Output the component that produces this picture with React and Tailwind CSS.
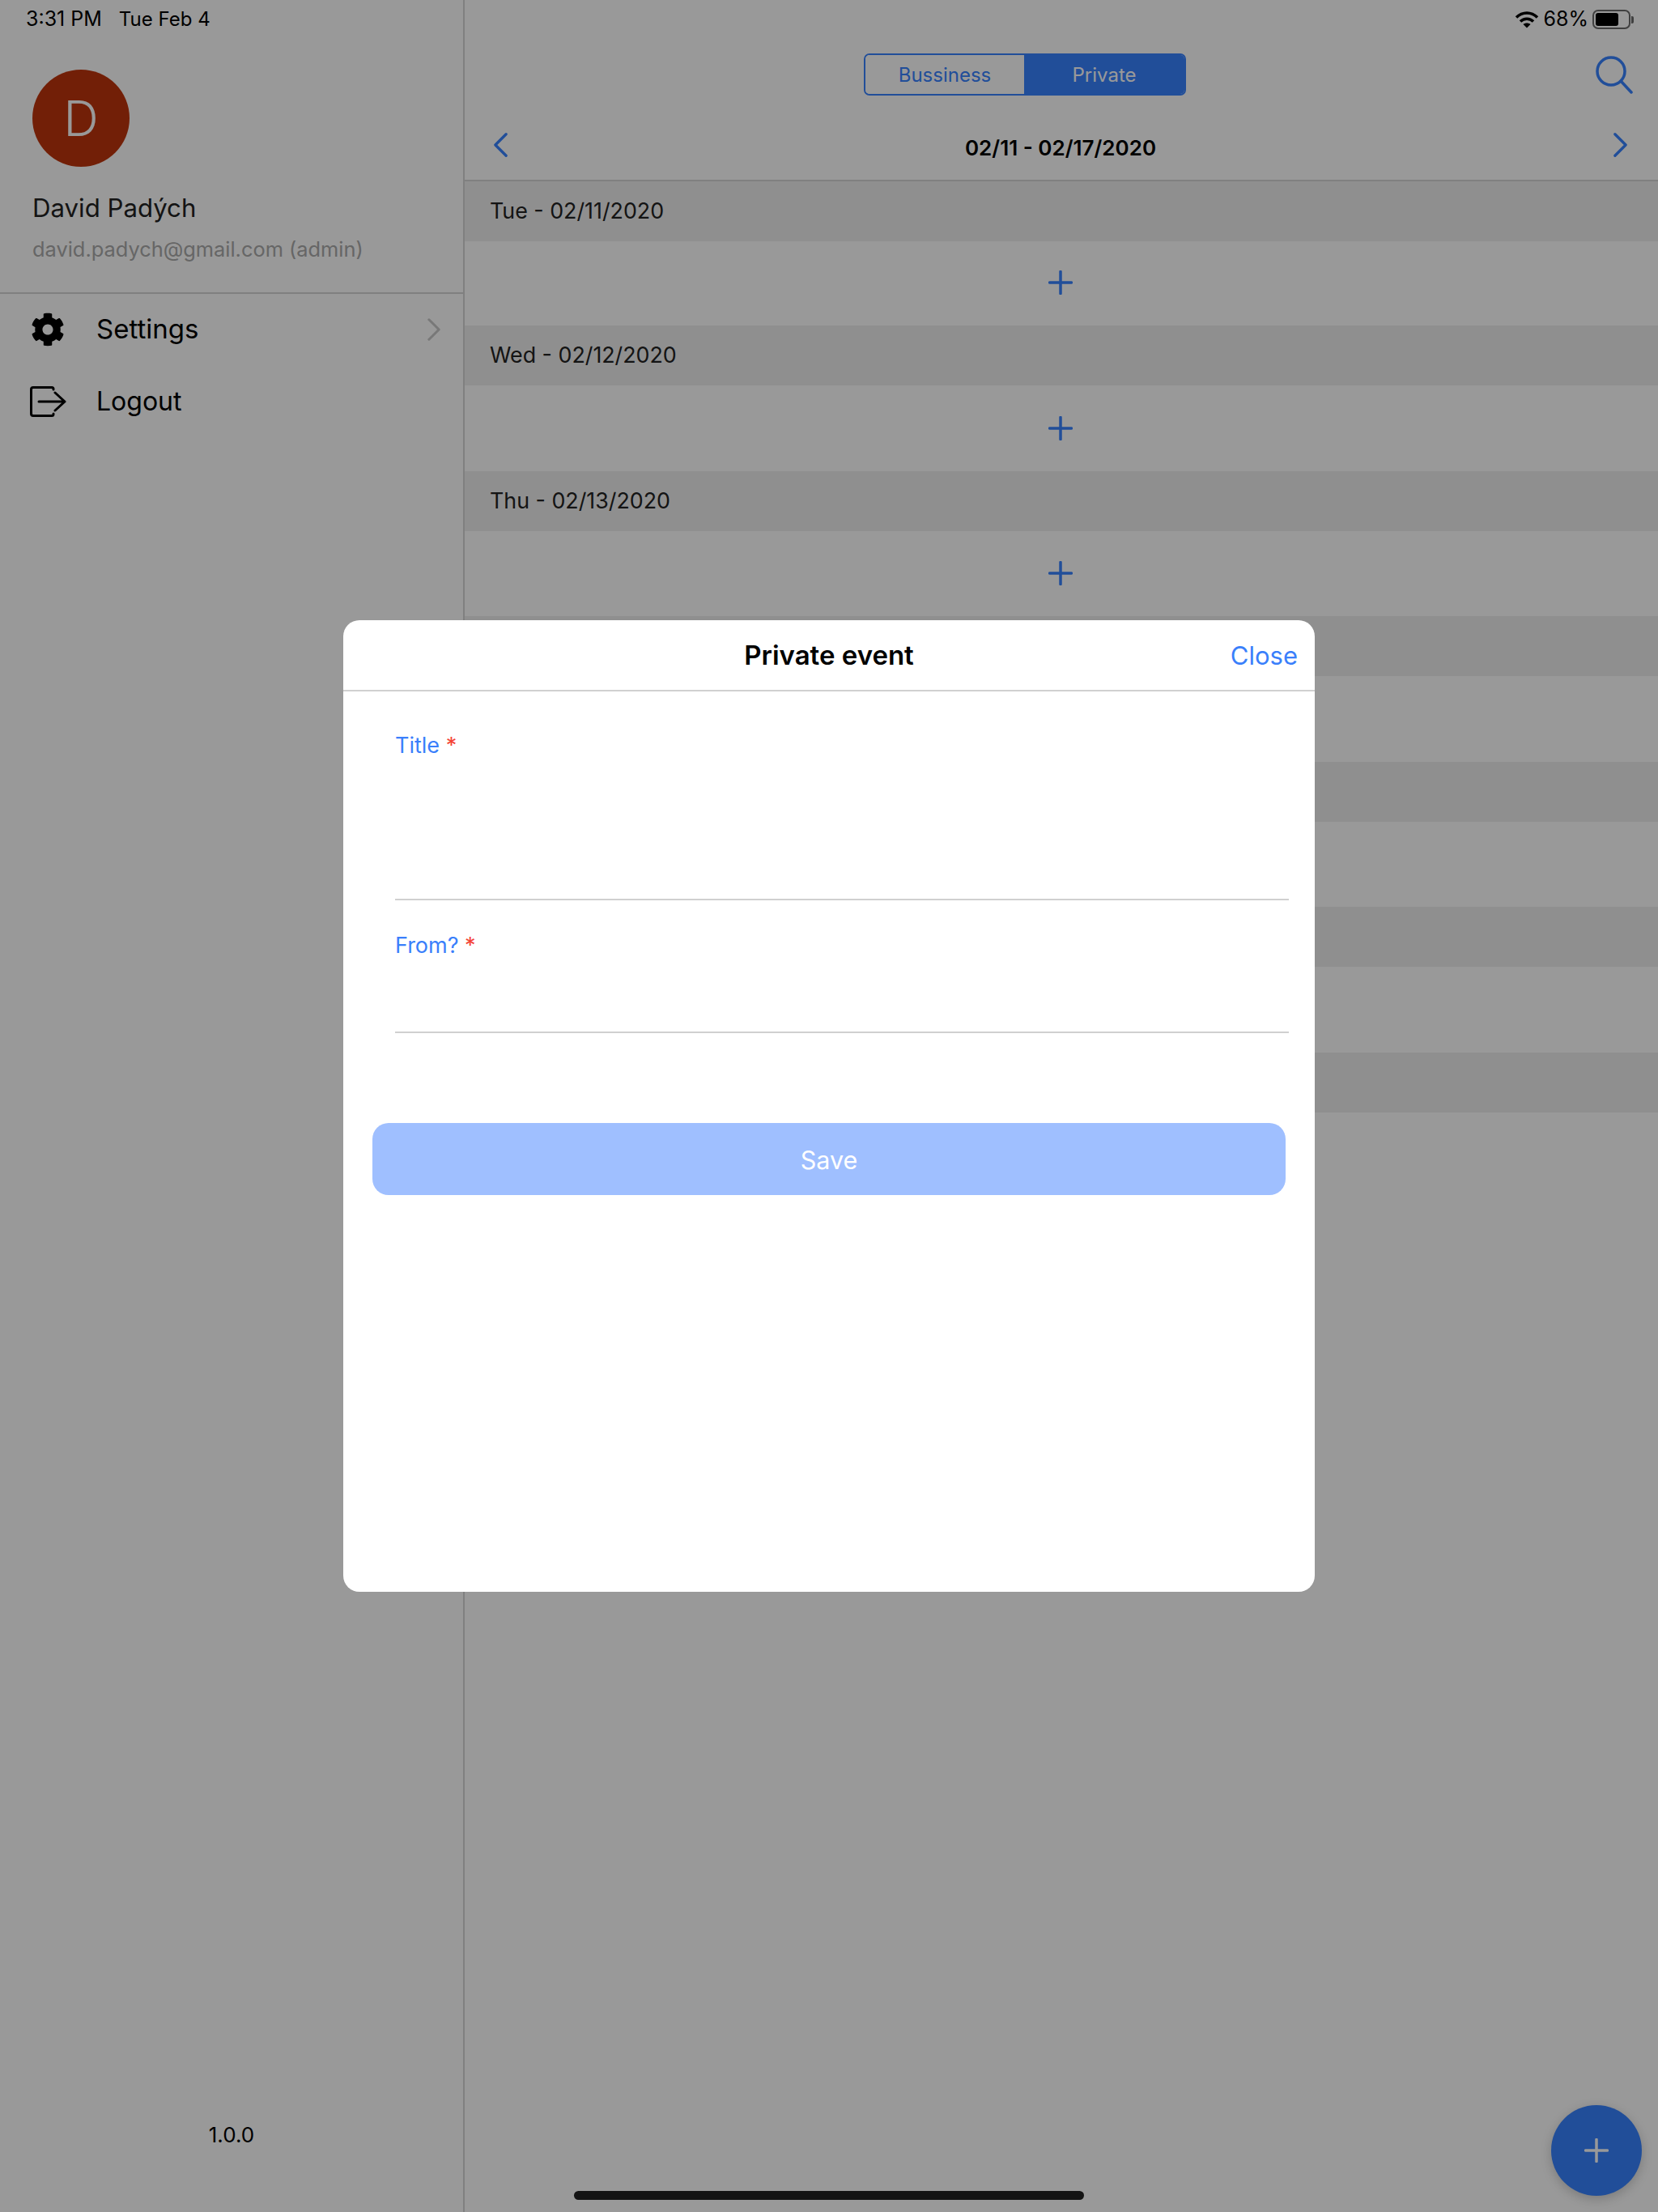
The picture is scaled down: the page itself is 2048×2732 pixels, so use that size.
import React from "react";
import { FaCog } from "react-icons/fa";

const days = [
  "Tue - 02/11/2020",
  "Wed - 02/12/2020",
  "Thu - 02/13/2020",
  "Fri - 02/14/2020",
  "Sat - 02/15/2020",
  "Sun - 02/16/2020",
  "Mon - 02/17/2020",
];

function Plus({ className }) {
  return (
    <svg className={className} viewBox="0 0 30 30" fill="none" stroke="currentColor" strokeWidth="3.5" strokeLinecap="round">
      <path d="M15 1.5V28.5M1.5 15H28.5" />
    </svg>
  );
}

function Chevron({ left, className }) {
  return (
    <svg className={className} viewBox="0 0 18 32" fill="none" stroke="currentColor" strokeWidth="3.5" strokeLinecap="round" strokeLinejoin="round">
      <path d={left ? "M16 2L2 16L16 30" : "M2 2L16 16L2 30"} />
    </svg>
  );
}

function Sidebar() {
  return (
    <aside className="w-[574px] shrink-0 h-full flex flex-col border-r-2 border-[#d6d6d6]">
      <div className="h-[48px] flex items-center pl-[32px] text-black">
        <span className="text-[25px]">3:31 PM</span>
        <span className="ml-[21px] text-[24px]">Tue Feb 4</span>
      </div>
      <div className="h-[315px] pl-[40px] pt-[38px] border-b-2 border-[#d6d6d6]">
        <div className="w-[120px] h-[120px] rounded-full bg-[#bf350c] flex items-center justify-center text-white text-[60px] font-light">
          D
        </div>
        <div className="mt-[29px] text-[31.2px] leading-[44px] text-[#222]">David Padých</div>
        <div className="mt-[11px] text-[25.4px] leading-[36px] text-[#aaaaaa]">david.padych@gmail.com (admin)</div>
      </div>
      <div className="h-[88px] flex items-center pl-[38px] pr-[28px] text-[33px] text-black">
        <FaCog className="w-[42px] h-[42px]" />
        <span className="ml-[39px] flex-1">Settings</span>
        <Chevron className="w-[16px] h-[28px] text-[#c8c8c8]" />
      </div>
      <div className="h-[90px] flex items-center pl-[36px] text-[32px] text-black">
        <svg className="w-[46px] h-[40px]" viewBox="0 0 46 40" fill="none" stroke="currentColor" strokeWidth="3" strokeLinecap="round" strokeLinejoin="round">
          <path d="M30 5V4.5Q30 2.5 28 2.5H5Q2.5 2.5 2.5 5V35Q2.5 37.5 5 37.5H28Q30 37.5 30 35.5V35" />
          <path d="M12 20H44M32 9L44 20L32 31" />
        </svg>
        <span className="ml-[37px]">Logout</span>
      </div>
      <div className="mt-auto pb-[77px] text-center text-[26px] leading-[36px] text-black">1.0.0</div>
    </aside>
  );
}

function Main() {
  return (
    <main className="relative flex-1 h-full flex flex-col">
      <div className="h-[48px] flex items-center justify-end pr-[30px] text-[25px] text-black">
        <svg className="w-[30px] h-[22px]" viewBox="0 0 30 22" fill="none" stroke="currentColor" strokeWidth="3.5" strokeLinecap="butt">
          <path d="M2 8.5C9.5 1 20.5 1 28 8.5" />
          <path d="M7 13.5C11.5 9 18.5 9 23 13.5" />
          <path d="M15 21.5L10.5 17C13 15 17 15 19.5 17Z" fill="currentColor" stroke="none" />
        </svg>
        <span className="ml-[5px]">68%</span>
        <div className="ml-[5px] w-[47px] h-[24px] rounded-[7px] border-2 border-[#6c6c6c] p-[2px] flex">
          <div className="w-[28px] h-full rounded-[3px] bg-black" />
        </div>
        <div className="ml-[1px] w-[3px] h-[9px] rounded-r-[2px] bg-[#6c6c6c]" />
      </div>
      <div className="h-[88px] flex items-center">
        <div className="flex-1 flex justify-center">
          <div className="w-[398px] h-[52px] flex rounded-[7px] border-2 border-[#3782ff] overflow-hidden text-[24px]">
            <div className="w-[196px] pt-[2px] bg-white flex items-center justify-center text-[#3782ff]">Bussiness</div>
            <div className="flex-1 pt-[2px] bg-[#3782ff] flex items-center justify-center text-white">Private</div>
          </div>
        </div>
        <div className="pl-[13px] pr-[31px]">
          <svg className="w-[46px] h-[47px] text-[#3782ff]" viewBox="0 0 46 47" fill="none" stroke="currentColor" strokeWidth="3.5" strokeLinecap="round">
            <circle cx="19" cy="19" r="17" />
            <path d="M31 31L44 45" />
          </svg>
        </div>
      </div>
      <div className="h-[88px] flex items-center justify-between pl-[36px] pr-[38px] border-b-2 border-[#d6d6d6]">
        <Chevron left className="w-[17px] h-[32px] text-[#3782ff]" />
        <span className="mt-[6px] text-[26px] font-semibold text-black">02/11 - 02/17/2020</span>
        <Chevron className="w-[17px] h-[32px] text-[#3782ff]" />
      </div>
      {days.map((day, i) => (
        <div key={day}>
          <div className="h-[74px] pb-[2px] flex items-center pl-[31px] bg-[#eeeeee] text-[26.8px] text-[#222]">{day}</div>
          <div className={i === 0 ? "h-[104px] pr-[2px] pb-[2px] flex items-center justify-center" : "h-[105.6px] pr-[2px] flex items-center justify-center"}>
            <Plus className="w-[30px] h-[30px] text-[#3782ff]" />
          </div>
        </div>
      ))}
      <button className="absolute right-[20px] bottom-[20px] w-[112px] h-[112px] rounded-full bg-[#3782ff] flex items-center justify-center shadow-[0_4px_14px_rgba(0,0,0,0.2)]">
        <Plus className="w-[30px] h-[30px] text-white" />
      </button>
    </main>
  );
}

function EventModal() {
  return (
    <div className="w-[1200px] h-[1200px] bg-white rounded-[20px] flex flex-col">
      <div className="relative h-[88px] shrink-0 pt-[2px] flex items-center justify-center border-b-2 border-[#d0d0d0]">
        <span className="text-[33px] font-semibold text-black">Private event</span>
        <span className="absolute right-[21px] text-[31px] text-[#3a7ffb]">Close</span>
      </div>
      <div className="px-[64px] pr-[32px]">
        <div className="h-[258px] pt-[47px] border-b-2 border-[#d0d0d0] text-[27px] leading-[40px] text-[#3a7ffb]">
          Title <span className="text-[#f44336]">*</span>
        </div>
        <div className="h-[164px] pt-[36px] border-b-2 border-[#d0d0d0] text-[27px] leading-[40px] text-[#3a7ffb]">
          From? <span className="text-[#f44336]">*</span>
        </div>
      </div>
      <div className="mt-[111px] mx-[36px] h-[89px] rounded-[20px] bg-[#9fbfff] flex items-center justify-center text-[30.5px] pt-[2px] text-white">
        Save
      </div>
    </div>
  );
}

export default function App() {
  return (
    <div className="relative w-[2048px] h-[2732px] bg-white overflow-hidden font-['Inter','Liberation_Sans',sans-serif]">
      <div className="flex h-full">
        <Sidebar />
        <Main />
      </div>
      <div className="absolute inset-0 bg-black/40 flex items-center justify-center">
        <EventModal />
        <div className="absolute left-[709px] bottom-[15px] w-[630px] h-[11px] rounded-full bg-[#141414]" />
      </div>
    </div>
  );
}
